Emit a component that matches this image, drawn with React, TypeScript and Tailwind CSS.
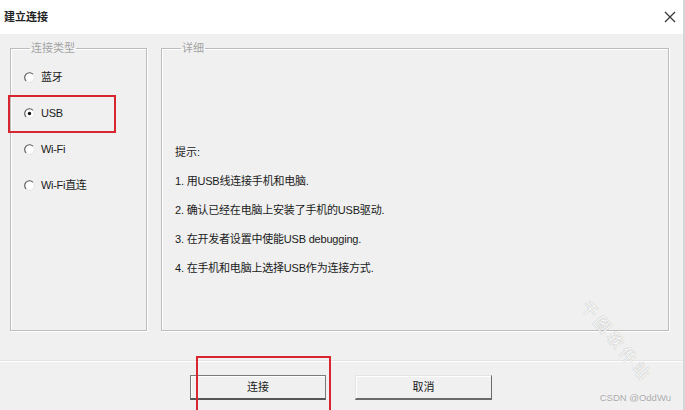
import React from 'react';

const Radio: React.FC<{ checked?: boolean }> = ({ checked }) => (
  <svg width="11" height="11" viewBox="0 0 11 11" className="shrink-0">
    <circle cx="5.5" cy="5.5" r="4.8" fill="#ffffff" stroke="#e3e3e3" strokeWidth="1" />
    <path d="M8.9 2.1 A4.8 4.8 0 0 0 2.1 8.9" fill="none" stroke="#5a5a5a" strokeWidth="1.1" />
    {checked && <circle cx="5.5" cy="5.5" r="1.7" fill="#111111" />}
  </svg>
);

const App: React.FC = () => {
  const types = [
    { label: '蓝牙', checked: false },
    { label: 'USB', checked: true },
    { label: 'Wi-Fi', checked: false },
    { label: 'Wi-Fi直连', checked: false }
  ];

  const tips = [
    '1. 用USB线连接手机和电脑.',
    '2. 确认已经在电脑上安装了手机的USB驱动.',
    '3. 在开发者设置中使能USB debugging.',
    '4. 在手机和电脑上选择USB作为连接方式.'
  ];

  return (
    <div className="relative w-[685px] h-[410px] overflow-hidden bg-[#f0f0f0] border-r-2 border-[#d6d6d6] font-['Liberation_Sans','Noto_Sans_CJK_SC',sans-serif] text-[11px] text-[#1a1a1a]">
      {/* Title bar */}
      <div className="h-[34px] bg-white flex items-center justify-between pl-[4px] pr-[7px]">
        <span className="text-[11px] font-bold text-[#222]">建立连接</span>
        <svg width="12" height="12" viewBox="0 0 12 12">
          <path d="M1 1 L11 11 M11 1 L1 11" stroke="#3a3a3a" strokeWidth="1.3" />
        </svg>
      </div>

      {/* Group boxes */}
      <div className="flex gap-[14px] pl-[10px] pr-[14px] pt-[6px]">
        <fieldset className="w-[137px] h-[291px] border border-[#bcbcbc] shadow-[inset_1px_1px_0_#ffffff,1px_1px_0_#ffffff] pl-[13px]">
          <legend className="ml-[6px] px-[1px] leading-[16px] text-[#a3a3a3]">连接类型</legend>
          <div className="flex flex-col gap-[16px] pt-[11px]">
            {types.map((t) => (
              <div key={t.label} className="h-[20px] flex items-center gap-[6px]">
                <Radio checked={t.checked} />
                <span className="tracking-[-0.3px]">{t.label}</span>
              </div>
            ))}
          </div>
        </fieldset>

        <fieldset className="flex-1 h-[291px] border border-[#bcbcbc] shadow-[inset_1px_1px_0_#ffffff,1px_1px_0_#ffffff] pl-[13px]">
          <legend className="ml-[6px] px-[1px] leading-[16px] text-[#a3a3a3]">详细</legend>
          <div className="flex flex-col gap-[9px] pt-[86px]">
            <div className="h-[20px] flex items-center">提示:</div>
            {tips.map((tip) => (
              <div key={tip} className="h-[20px] flex items-center tracking-[-0.2px]">
                {tip}
              </div>
            ))}
          </div>
        </fieldset>
      </div>

      {/* Footer */}
      <div className="mt-[29px] border-t border-[#e2e2e2] shadow-[inset_0_1px_0_#ffffff]">
        <div className="flex gap-[29px] pl-[190px] pt-[14px]">
          <button className="w-[136px] h-[25px] flex items-center justify-center bg-[#f0f0f0] border border-[#7a7a7a] border-b-2 border-b-[#555] shadow-[inset_1px_1px_0_#ffffff] text-[11px]">
            连接
          </button>
          <button className="w-[137px] h-[25px] flex items-center justify-center bg-[#f0f0f0] border border-t-[#e4e4e4] border-l-[#e4e4e4] border-r-[#6a6a6a] border-b-2 border-b-[#6a6a6a] shadow-[inset_1px_1px_0_#ffffff] text-[11px]">
            取消
          </button>
        </div>
      </div>

      {/* Annotations */}
      <div className="absolute left-[8px] top-[95px] w-[108px] h-[38px] border-2 border-[#d8262e]" />
      <div className="absolute left-[196px] top-[356px] w-[135px] h-[60px] border-2 border-[#d8262e]" />

      {/* Watermark */}
      <div className="absolute left-[566px] top-[330px] rotate-[50deg] text-[16px] tracking-[4px] text-[#fbfbfb] [text-shadow:0_0_1px_#9a9a9a] whitespace-nowrap">
        千图软件站
      </div>
      <div className="absolute right-[12px] bottom-[5px] text-[9.5px] text-[#a9a9a9] [text-shadow:0_0_1px_#ffffff]">
        CSDN @OddWu
      </div>
    </div>
  );
};

export default App;
